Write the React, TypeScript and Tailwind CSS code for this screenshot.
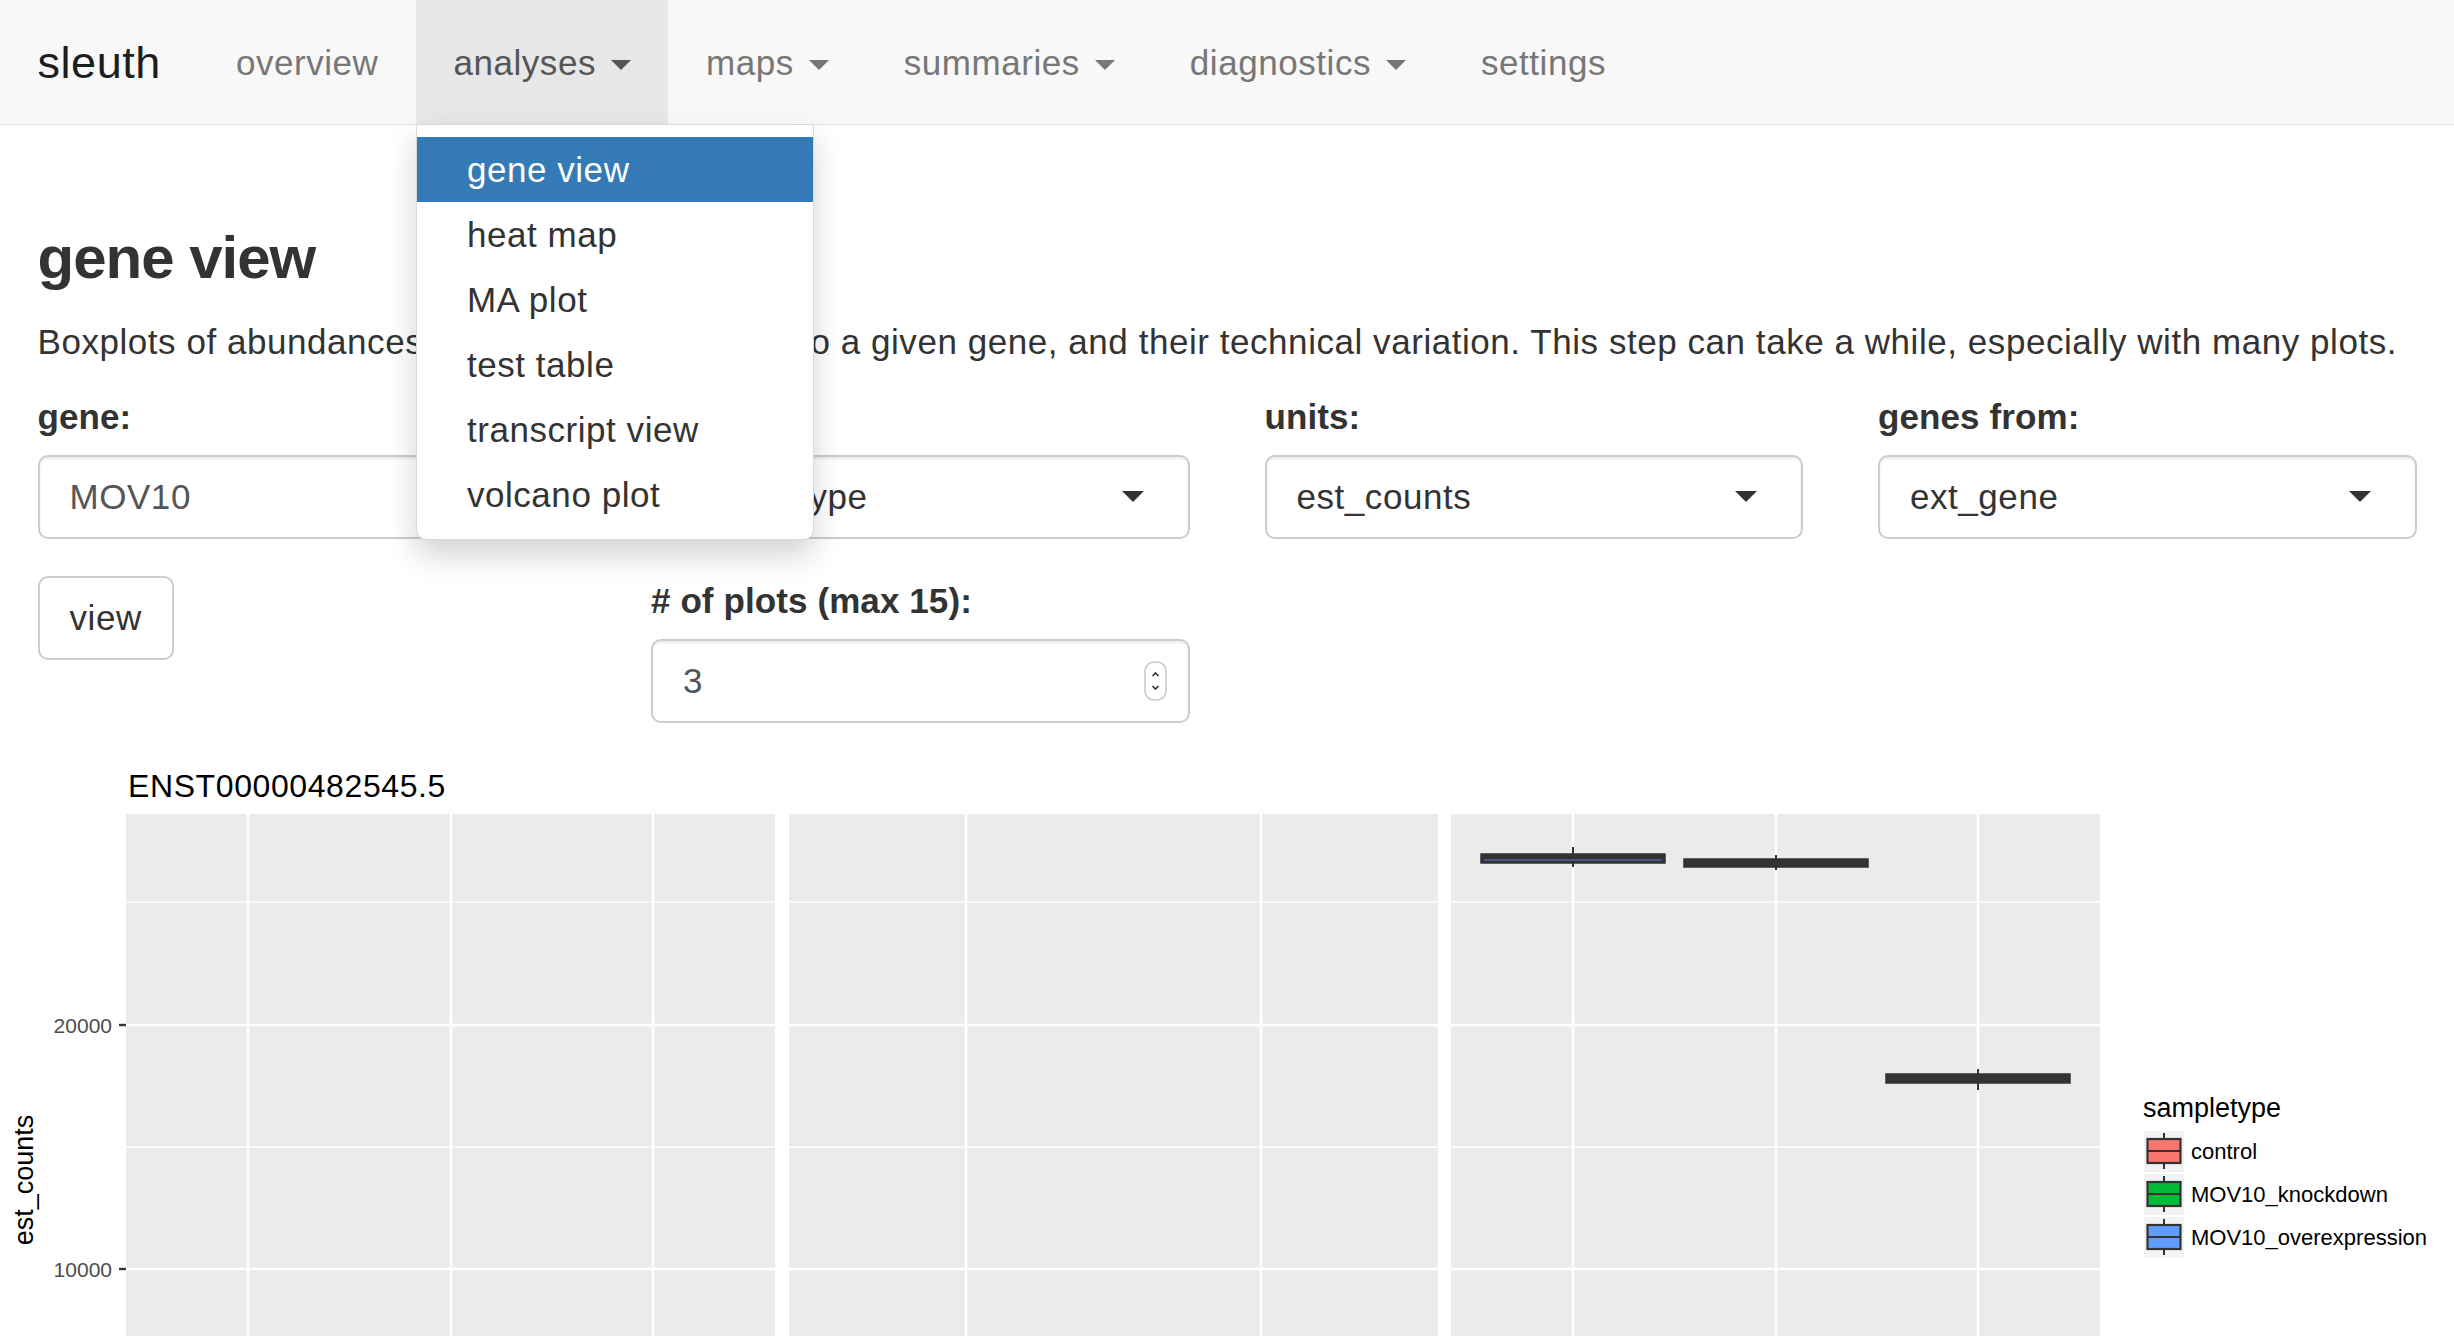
import React from 'react'

const navItems = [
  { label: 'overview' },
  { label: 'analyses', caret: true, active: true },
  { label: 'maps', caret: true },
  { label: 'summaries', caret: true },
  { label: 'diagnostics', caret: true },
  { label: 'settings' },
]

const analyses = ['gene view', 'heat map', 'MA plot', 'test table', 'transcript view', 'volcano plot']

function Caret() {
  return (
    <span className="ml-[15px] inline-block h-0 w-0 border-x-[10px] border-t-[10px] border-x-transparent border-t-current align-middle" />
  )
}

function Navbar() {
  return (
    <nav className="flex h-[125px] border-b border-[#e7e7e7] bg-[#f8f8f8]">
      <div className="px-[37.5px] pt-[37.5px] text-[45px] leading-[50px] text-[#1e1e1e]">sleuth</div>
      <ul className="flex">
        {navItems.map((item) => (
          <li key={item.label} className="relative">
            <div
              className={`h-full whitespace-nowrap px-[37.5px] pt-[37.5px] leading-[50px] ${
                item.active ? 'bg-[#e7e7e7] text-[#555]' : 'text-[#777]'
              }`}
            >
              {item.label}
              {item.caret && <Caret />}
            </div>
            {item.active && (
              <div className="absolute left-0 top-full z-10 w-[398px] rounded-b-[10px] border border-[rgba(0,0,0,0.15)] bg-white py-[12px] shadow-[0_15px_30px_rgba(0,0,0,0.175)]">
                {analyses.map((a, i) => (
                  <div
                    key={a}
                    className={`whitespace-nowrap px-[50px] py-[7.5px] leading-[50px] ${
                      i === 0 ? 'bg-[#337ab7] text-white' : 'text-[#333]'
                    }`}
                  >
                    {a}
                  </div>
                ))}
              </div>
            )}
          </li>
        ))}
      </ul>
    </nav>
  )
}

function Label({ children }: { children: React.ReactNode }) {
  return <div className="mb-[12.5px] font-bold leading-[50px] tracking-[0.1px] text-[#333]">{children}</div>
}

function Select({ value }: { value: string }) {
  return (
    <div className="flex h-[84px] items-center justify-between rounded-[10px] border-2 border-[#ccc] bg-white pl-[30px] pr-[44px] text-[#333] shadow-[inset_0_2px_2px_rgba(0,0,0,0.075)]">
      <span>{value}</span>
      <span className="inline-block h-0 w-0 border-x-[11px] border-t-[11px] border-x-transparent border-t-[#333]" />
    </div>
  )
}

function Spinner() {
  return (
    <svg width="23" height="40" viewBox="0 0 23 40">
      <rect x="1" y="1" width="21" height="38" rx="9" fill="#fff" stroke="#c8c8c8" strokeWidth="1.5" />
      <path d="M8.5 15 L11.5 12 L14.5 15" fill="none" stroke="#333" strokeWidth="1.6" />
      <path d="M8.5 25 L11.5 28 L14.5 25" fill="none" stroke="#333" strokeWidth="1.6" />
    </svg>
  )
}

const legend = [
  { label: 'control', color: '#F8766D' },
  { label: 'MOV10_knockdown', color: '#00BA38' },
  { label: 'MOV10_overexpression', color: '#619CFF' },
]

function Plot() {
  const panels = [126, 789, 1451]
  const pw = 649
  const vlines = [248, 451, 653, 966, 1261, 1573, 1776, 1978]
  return (
    <svg
      width="2454"
      height="576"
      className="block"
      fontFamily="'Liberation Sans', Arial, sans-serif"
      letterSpacing="0"
    >
      <text x="128" y="37" fontSize="32" letterSpacing="0.6" fill="#000">
        ENST00000482545.5
      </text>

      {panels.map((x) => (
        <g key={x}>
          <rect x={x} y={54} width={pw} height={530} fill="#ebebeb" />
          <line x1={x} x2={x + pw} y1={142} y2={142} stroke="#fff" strokeWidth={1.3} />
          <line x1={x} x2={x + pw} y1={387} y2={387} stroke="#fff" strokeWidth={1.3} />
          <line x1={x} x2={x + pw} y1={265} y2={265} stroke="#fff" strokeWidth={2.6} />
          <line x1={x} x2={x + pw} y1={509} y2={509} stroke="#fff" strokeWidth={2.6} />
        </g>
      ))}
      {vlines.map((x) => (
        <line key={x} x1={x} x2={x} y1={54} y2={576} stroke="#fff" strokeWidth={2.6} />
      ))}

      {/* y axis */}
      <line x1={119} x2={126} y1={265} y2={265} stroke="#333" strokeWidth={2.4} />
      <line x1={119} x2={126} y1={509} y2={509} stroke="#333" strokeWidth={2.4} />
      <text x="112" y="272.5" fontSize="21" fill="#4d4d4d" textAnchor="end">
        20000
      </text>
      <text x="112" y="516.5" fontSize="21" fill="#4d4d4d" textAnchor="end">
        10000
      </text>
      <text transform="translate(33 420) rotate(-90)" fontSize="27" fill="#000" textAnchor="middle">
        est_counts
      </text>

      {/* boxes */}
      <line x1={1573} x2={1573} y1={87} y2={107} stroke="#333" strokeWidth={2} />
      <rect x={1481} y={94} width={184} height={9} fill="#333" stroke="#333" strokeWidth={1.5} />
      <line x1={1484} x2={1662} y1={100} y2={100} stroke="#5b7fc4" strokeWidth={1.2} />

      <line x1={1776} x2={1776} y1={95} y2={110} stroke="#333" strokeWidth={2} />
      <rect x={1684} y={99} width={184} height={8} fill="#333" stroke="#333" strokeWidth={1.5} />

      <line x1={1978} x2={1978} y1={309} y2={330} stroke="#333" strokeWidth={2} />
      <rect x={1886} y={314} width={184} height={9} fill="#333" stroke="#333" strokeWidth={1.5} />

      {/* legend */}
      <text x="2143" y="357" fontSize="27" fill="#000">
        sampletype
      </text>
      {legend.map((l, i) => {
        const y = 371 + i * 43
        return (
          <g key={l.label}>
            <rect x={2144} y={y} width={40} height={41} fill="#f2f2f2" />
            <line x1={2164} x2={2164} y1={y + 2} y2={y + 38} stroke="#333" strokeWidth={2} />
            <rect x={2147.5} y={y + 8} width={33} height={24} fill={l.color} stroke="#333" strokeWidth={2.2} />
            <line x1={2147.5} x2={2180.5} y1={y + 20} y2={y + 20} stroke="#333" strokeWidth={2.2} />
            <text x={2191} y={y + 28} fontSize="22" fill="#000">
              {l.label}
            </text>
          </g>
        )
      })}
    </svg>
  )
}

export default function App() {
  return (
    <div className="min-h-screen bg-white font-['Liberation_Sans',Arial,sans-serif] text-[35px] leading-[50px] tracking-[0.55px] text-[#333]">
      <Navbar />
      <main className="px-[37.5px]">
        <h3 className="mt-[100px] text-[60px] font-bold leading-[66px] tracking-[-1px] text-[#333]">gene view</h3>
        <p className="mb-[25px] mt-[26px]">
          Boxplots of abundances of transcripts mapping to a given gene, and their technical variation. This step can
          take a while, especially with many plots.
        </p>

        <div className="grid grid-cols-4 gap-x-[75px]">
          <div className="mb-[37.5px]">
            <Label>gene:</Label>
            <div className="flex h-[84px] items-center rounded-[10px] border-2 border-[#ccc] bg-white px-[30px] text-[#555] shadow-[inset_0_2px_2px_rgba(0,0,0,0.075)]">
              MOV10
            </div>
          </div>
          <div className="mb-[37.5px]">
            <Label>color by:</Label>
            <Select value="sampletype" />
          </div>
          <div className="mb-[37.5px]">
            <Label>units:</Label>
            <Select value="est_counts" />
          </div>
          <div className="mb-[37.5px]">
            <Label>genes from:</Label>
            <Select value="ext_gene" />
          </div>

          <div className="mb-[37.5px]">
            <div className="inline-flex h-[84px] items-center rounded-[10px] border-2 border-[#ccc] bg-white px-[30px] text-[#333]">
              view
            </div>
          </div>
          <div className="mb-[37.5px]">
            <Label># of plots (max 15):</Label>
            <div className="flex h-[84px] items-center justify-between rounded-[10px] border-2 border-[#ccc] bg-white pl-[30px] pr-[21px] text-[#555] shadow-[inset_0_2px_2px_rgba(0,0,0,0.075)]">
              <span>3</span>
              <Spinner />
            </div>
          </div>
        </div>
      </main>
      <Plot />
    </div>
  )
}
